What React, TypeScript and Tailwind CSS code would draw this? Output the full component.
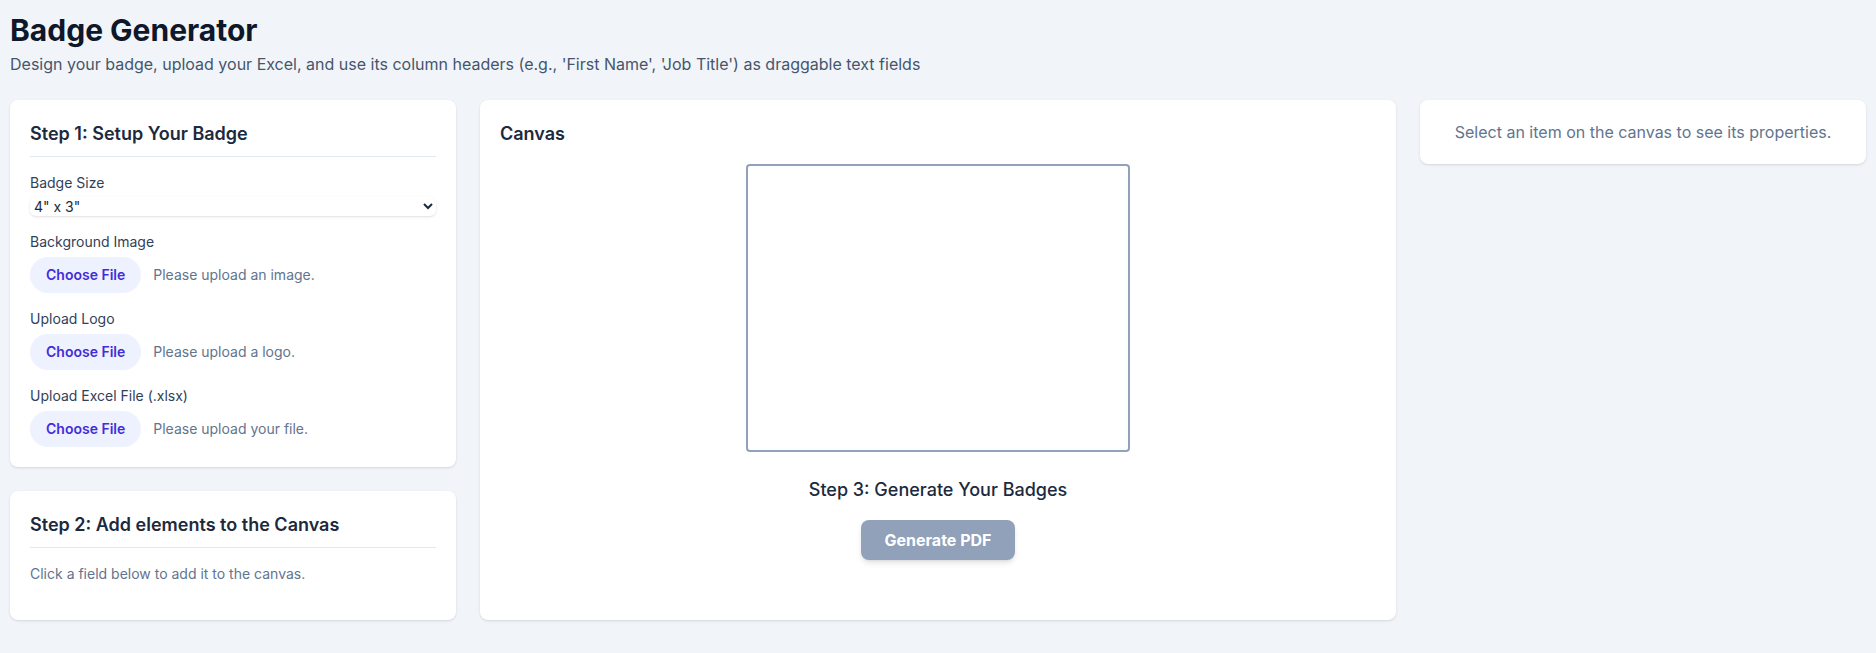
import { useState } from "react";

// single file upload row: pill button + status text
function UploadField({ label, hint }: { label: string; hint: string }) {
  return (
    <div className="mt-4">
      <label className="block text-sm text-slate-700">{label}</label>
      <div className="mt-1 flex h-[37px] items-center">
        <button className="rounded-full bg-indigo-50 px-4 py-2 text-sm font-semibold text-indigo-700">
          Choose File
        </button>
        <span className="ml-3 text-sm text-slate-500">{hint}</span>
      </div>
    </div>
  );
}

export default function App() {
  const [size, setSize] = useState("4x3");

  return (
    <div className="min-h-screen bg-slate-100 px-2.5 pt-3 pb-6 font-[Inter,sans-serif]">
      <header className="mb-6">
        <h1 className="text-3xl font-bold text-slate-900">Badge Generator</h1>
        <p className="mt-1 text-base text-slate-600">
          Design your badge, upload your Excel, and use its column headers (e.g., 'First Name', 'Job Title') as
          draggable text fields
        </p>
      </header>

      <div className="grid grid-cols-12 gap-6">
        {/* left column */}
        <div className="col-span-3 flex flex-col gap-6">
          <div className="rounded-lg bg-white p-5 shadow-sm">
            <h2 className="border-b border-slate-200 pb-2 text-lg font-semibold text-slate-800">
              Step 1: Setup Your Badge
            </h2>
            <div className="mt-4">
              <label className="block text-sm text-slate-700">Badge Size</label>
              <select
                value={size}
                onChange={(e) => setSize(e.target.value)}
                className="mt-1 block h-[19px] w-full rounded-md text-sm text-slate-800 shadow-sm"
              >
                <option value="4x3">4" x 3"</option>
                <option value="3x4">3" x 4"</option>
                <option value="4x6">4" x 6"</option>
              </select>
            </div>
            <UploadField label="Background Image" hint="Please upload an image." />
            <UploadField label="Upload Logo" hint="Please upload a logo." />
            <UploadField label="Upload Excel File (.xlsx)" hint="Please upload your file." />
          </div>

          <div className="rounded-lg bg-white p-5 shadow-sm">
            <h2 className="border-b border-slate-200 pb-2 text-lg font-semibold text-slate-800">
              Step 2: Add elements to the Canvas
            </h2>
            <p className="mt-4 text-sm text-slate-500">Click a field below to add it to the canvas.</p>
            <div className="mt-4 flex flex-wrap gap-2"></div>
          </div>
        </div>

        {/* canvas */}
        <div className="col-span-6 rounded-lg bg-white p-5 shadow-sm">
          <h2 className="text-lg font-semibold text-slate-800">Canvas</h2>
          <div className="mt-4 flex flex-col items-center">
            <div className="h-[288px] w-[384px] rounded-[4px] border-2 border-slate-400 bg-white"></div>
            <h3 className="mt-6 text-lg font-medium text-slate-800">Step 3: Generate Your Badges</h3>
            <button
              disabled
              className="mt-4 rounded-lg bg-slate-400 px-6 py-2 font-bold text-white shadow-md"
            >
              Generate PDF
            </button>
          </div>
        </div>

        {/* properties */}
        <div className="col-span-3 self-start rounded-lg bg-white p-5 text-center shadow-sm">
          <p className="text-base text-slate-500">Select an item on the canvas to see its properties.</p>
        </div>
      </div>
    </div>
  );
}
